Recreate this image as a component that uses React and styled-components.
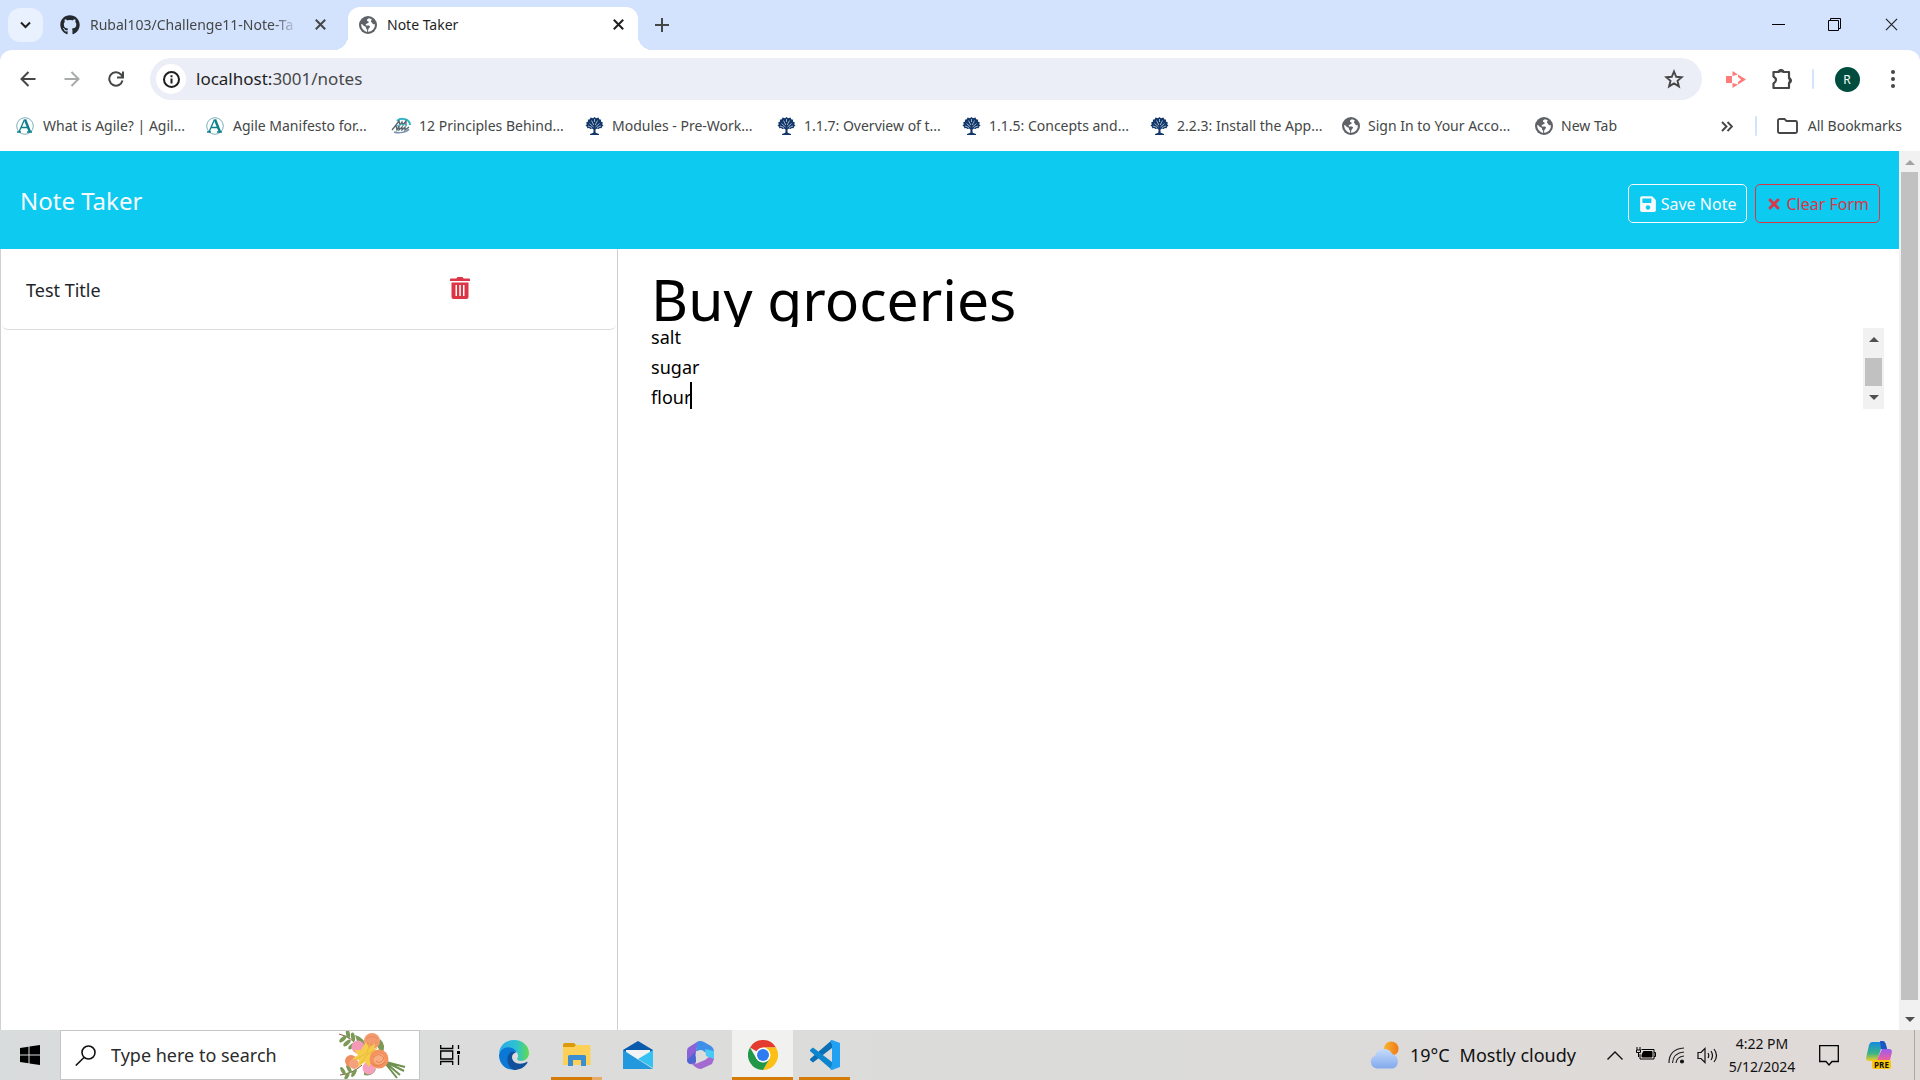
import React, { useLayoutEffect, useRef } from "react";
import styled, { createGlobalStyle } from "styled-components";
import { FaGithub, FaSave, FaTimes } from "react-icons/fa";

const Global = createGlobalStyle`
  * { box-sizing: border-box; }
  body { margin: 0; background: #fff; font-family: "Noto Sans", "Open Sans", sans-serif; color: #1f1f1f; }
  button, input, textarea { font-family: inherit; }
`;

/* ---------- shell ---------- */
const Screen = styled.div`
  display: grid;
  grid-template-rows: auto 1fr auto;
  height: 100vh;
  overflow: hidden;
`;
const BareButton = styled.button`
  display: flex;
  align-items: center;
  justify-content: center;
  flex: none;
  padding: 0;
  border: 0;
  background: none;
  color: ${(p) => p.$color || "#444746"};
  width: ${(p) => p.$w || 44}px;
  height: ${(p) => p.$h || 40}px;
`;

/* ---------- browser ---------- */
const Browser = styled.header`background: #d3e2fd;`;
const TabStrip = styled.div`
  display: flex;
  align-items: flex-end;
  height: 50px;
`;
const TabSearch = styled(BareButton)`
  align-self: center;
  margin: 0 9px 0 8px;
  border-radius: 12px;
  background: #e9f0fe;
`;
const Tab = styled.div`
  position: relative;
  display: flex;
  align-items: center;
  gap: 10px;
  width: ${(p) => p.$w}px;
  height: 43px;
  padding: ${(p) => (p.$active ? "0 10px 8px 11px" : "0 16px 8px 8px")};
  border-radius: 12px 12px 0 0;
  background: ${(p) => (p.$active ? "#fff" : "none")};
  svg { flex: none; }
  ${(p) => p.$active && `
    &::before, &::after {
      content: "";
      position: absolute;
      bottom: 0;
      width: 14px;
      height: 14px;
    }
    &::before { left: -14px; background: radial-gradient(circle at 0 0, transparent 14px, #fff 14px); }
    &::after { right: -14px; background: radial-gradient(circle at 100% 0, transparent 14px, #fff 14px); }
  `}
`;
const TabTitle = styled.span`
  flex: 1;
  overflow: hidden;
  white-space: nowrap;
  font-size: 14px;
  line-height: 20px;
  color: ${(p) => (p.$fade ? "#444746" : "#1f1f1f")};
  ${(p) => p.$fade && "mask-image: linear-gradient(90deg, #000 88%, transparent);"}
`;
const WindowControls = styled.div`
  display: flex;
  align-self: flex-start;
  margin-left: auto;
`;
const Toolbar = styled.div`
  display: flex;
  align-items: center;
  height: 58px;
  padding: 0 8px 0 6px;
  border-radius: 12px 12px 0 0;
  background: #fff;
`;
const Omnibox = styled.div`
  display: flex;
  align-items: center;
  flex: 1;
  height: 42px;
  margin: 0 12px 0 12px;
  padding: 0 6px;
  border-radius: 21px;
  background: #ebeef7;
`;
const SiteInfo = styled(BareButton)`border-radius: 50%; background: #fff;`;
const Address = styled.div`
  flex: 1;
  display: grid;
  padding-left: 10px;
  font-size: 17px;
  line-height: 24px;
`;
const Url = styled.a`
  color: #1f1f1f;
  text-decoration: none;
  span { color: #474747; }
`;
const Divider = styled.span`
  width: 2px;
  height: 20px;
  border-radius: 1px;
  background: #d3e2fd;
  margin: ${(p) => p.$margin || 0};
`;
const Avatar = styled.span`
  display: grid;
  place-items: center;
  width: 25px;
  height: 25px;
  border-radius: 50%;
  background: #004d40;
  color: #fff;
  font-size: 12px;
`;
const Bookmarks = styled.nav`
  display: flex;
  align-items: center;
  height: 43px;
  padding: 0 18px 7px 15px;
  background: #fff;
`;
const Bookmark = styled.a`
  display: flex;
  align-items: center;
  gap: ${(p) => p.$gap || 8}px;
  width: ${(p) => (p.$w ? p.$w + "px" : "auto")};
  white-space: nowrap;
  font-size: 14px;
  line-height: 20px;
  color: #444746;
  text-decoration: none;
  svg { flex: none; }
`;
const BookmarkEnd = styled.div`
  display: flex;
  align-items: center;
  gap: 20px;
  margin-left: auto;
`;

/* ---------- page ---------- */
const Viewport = styled.main`
  display: grid;
  grid-template-columns: 1fr 21px;
  min-height: 0;
`;
const Page = styled.div`
  display: grid;
  grid-template-rows: auto 1fr;
  min-height: 0;
`;
const NavBar = styled.div`
  display: flex;
  align-items: center;
  justify-content: space-between;
  height: 98px;
  padding: 2px 19px 0 20px;
  background: #0dcaf0;
`;
const Brand = styled.a`
  font-size: 24px;
  line-height: 36px;
  color: #f8f9fa;
  text-decoration: none;
`;
const Actions = styled.div`
  display: flex;
  gap: 8px;
  padding-top: 5px;
`;
const OutlineButton = styled.button`
  display: flex;
  align-items: center;
  gap: 4px;
  height: 39px;
  padding: 0 10px;
  border: 1px solid currentColor;
  border-radius: 5px;
  background: none;
  color: ${(p) => p.$color};
  font-size: 16px;
  line-height: 24px;
`;
const Columns = styled.div`
  display: grid;
  grid-template-columns: 32.55% 1fr;
  min-height: 0;
`;
const NoteList = styled.ul`
  margin: 0;
  padding: 0 1px;
  list-style: none;
  border: solid #ced0d2;
  border-width: 0 1px;
`;
const NoteItem = styled.li`
  display: flex;
  align-items: flex-start;
  height: 81px;
  padding: 26px 24px;
  border-bottom: 1px solid #dcdee0;
  border-radius: 0 0 6px 6px;
`;
const NoteName = styled.span`
  flex: 0 0 424px;
  font-size: 18px;
  line-height: 30px;
  color: #212529;
`;
const Editor = styled.form`
  padding: 21px 15px 0 33px;
`;
const TitleInput = styled.input`
  display: block;
  width: 100%;
  height: 57px;
  padding: 0;
  border: 0;
  outline: 0;
  font-size: 57px;
  line-height: 57px;
  color: #000;
`;
const TextRow = styled.div`
  position: relative;
  display: grid;
  grid-template-columns: 1fr 21px;
  align-items: start;
  margin-top: 1px;
`;
const TextInput = styled.textarea`
  display: block;
  width: 100%;
  height: 84px;
  padding: 0;
  border: 0;
  outline: 0;
  resize: none;
  overflow: hidden;
  font-size: 18px;
  line-height: 30px;
  color: #000;
`;
const Caret = styled.span`
  position: absolute;
  left: 39px;
  bottom: 3px;
  width: 2px;
  height: 27px;
  background: #000;
`;
const Track = styled.div`
  display: grid;
  grid-template-rows: ${(p) => p.$rows};
  justify-items: center;
  height: ${(p) => p.$h};
  background: #f1f1f1;
`;
const Thumb = styled.div`width: 17px; background: #c1c1c1; grid-row: 3;`;
const ArrowBox = styled(BareButton)`grid-row: ${(p) => p.$row};`;

/* ---------- taskbar ---------- */
const Taskbar = styled.footer`
  display: flex;
  height: 50px;
  background: linear-gradient(90deg, #d9dcdc, #dcdcdb 35%, #dbdbda 60%, #e0dad7);
`;
const SearchBox = styled.label`
  display: flex;
  align-items: center;
  width: 360px;
  padding: 0 12px 0 14px;
  border: 1px solid #c6c6c6;
  background: #fff;
`;
const SearchInput = styled.input`
  flex: 1;
  min-width: 0;
  margin-left: 15px;
  padding: 0;
  border: 0;
  outline: 0;
  font-size: 18px;
  line-height: 26px;
  &::placeholder { color: #2b2b2b; opacity: 1; }
`;
const TaskButton = styled(BareButton)`
  height: 50px;
  background-color: ${(p) => (p.$active ? "#f1f1ef" : "transparent")};
  background-image: ${(p) =>
    p.$line ? `linear-gradient(90deg, #d47b08 ${p.$line}, #e6ad68 ${p.$line})` : "none"};
  background-size: 100% 3px;
  background-position: bottom;
  background-repeat: no-repeat;
`;
const Apps = styled.div`
  display: flex;
  gap: ${(p) => p.$gap || 0}px;
`;
const Tray = styled.div`
  display: flex;
  align-items: center;
  margin-left: auto;
`;
const Weather = styled.button`
  display: flex;
  align-items: center;
  gap: 10px;
  padding: 0 18px 0 0;
  border: 0;
  background: none;
  color: #111;
  font-size: 18px;
  line-height: 26px;
`;
const Clock = styled.time`
  width: 88px;
  text-align: center;
  font-size: 14px;
  line-height: 23px;
  color: #111;
  span { display: block; }
`;
const ShowDesktop = styled(BareButton)`
  margin-left: 8px;
  border-left: 1px solid #a9a6a4;
`;

/* ---------- icons ---------- */
const Globe = ({ s = 18 }) => (
  <svg width={s} height={s} viewBox="0 0 18 18">
    <circle cx="9" cy="9" r="9" fill="#5f6368" />
    <path d="M10 2.2c-1.4.5-2.3 1.3-2 2.3.3.9 1.500.7 1.800 1.500.3 1-1.600 1.200-2.700 1.900-.8.5-.4 1.600.6 1.600h2c1.400 0 1.600 1.300.9 2.100-.8.8-1.300 1.300-1.500 2.900l-.3 1.300A7 7 0 0 0 15.900 8c-1.200.6-2.200.300-2.600-.7-.4-1.100-1.500-1-1.300-2.200.1-.7.900-.9.700-1.800A7 7 0 0 0 10 2.200zM2.200 8C2 12 4.500 15 8 15.900l.2-2.400c-.9-.2-1.300-.8-1.200-1.700.1-1-.6-1.300-1.500-1.600C4 9.700 4 8.200 2.200 8z" fill="#fff" />
  </svg>
);
const Cross = ({ s = 11, w = 2 }) => (
  <svg width={s} height={s} viewBox="0 0 11 11" stroke="currentColor" strokeWidth={w}><path d="M.8.8l9.400 9.400M10.200.8L.8 10.200" /></svg>
);
const AgileA = () => (
  <svg width="20" height="18" viewBox="0 0 20 18" fill="none">
    <circle cx="10" cy="9" r="8.300" stroke="#7fb0bd" strokeWidth="1" />
    <path d="M2 15h4M4 15L9.500 2.500M6 10.500h7.500M12 15h5" stroke="#0b7f8c" strokeWidth="1.300" />
    <path d="M10 2.500L15 15" stroke="#0b7f8c" strokeWidth="2.400" />
  </svg>
);
const AgileAlliance = () => (
  <svg width="20" height="18" viewBox="0 0 20 18" fill="none">
    <path d="M6 4c4-4 13-2 13 4" stroke="#35b6c8" strokeWidth="2" />
    <path d="M3 15c5 2 13 0 15-3" stroke="#7d93b5" strokeWidth="1.500" />
    <path d="M5 8l3-4 1 4 2-3 1 3 3-4v4M1 13l4-5 1 5 2-4v4l3-3v3l3-3v3l4-3" stroke="#56656e" strokeWidth="1.300" />
    <path d="M6 9c3-2 8-2 10 0" stroke="#35b6c8" strokeWidth="1.200" />
  </svg>
);
const Tree = () => (
  <svg width="19" height="18" viewBox="0 0 19 18" fill="#12376b">
    <path d="M9.500 0l1.500 1.200L13.500.6l.7 1.700 2 .5-.3 1.800 2 1-.7 1.600 1.300 1.500-1.700 1 .1 1.500-2.100-.1-1 1-2-.6-1.400 1.200.3 3 3.300 1.300v1H5v-1l3.300-1.300.3-3-1.400-1.200-2 .6-1-1-2.100.1.100-1.500-1.700-1 1.300-1.500-.7-1.600 2-1-.3-1.800 2-.5.7-1.700L8 1.200z" />
    <path d="M8.500 10L4.500 6.500M10.500 10l4-3.500M8.800 8L6.500 3.500M10.200 8l2.300-4.500M9.500 5V2M7 10.500l-4-1.500M12 10.500L16 9" stroke="#fff" strokeWidth=".6" fill="none" />
  </svg>
);
const Triangle = ({ up, color = "#505050" }) => (
  <svg width="10" height="5" viewBox="0 0 10 5" fill={color}><path d={up ? "M0 5L5 0l5 5z" : "M0 0l5 5 5-5z"} /></svg>
);
const Trash = () => (
  <svg width="20" height="22" viewBox="0 0 20 22" fill="#dc3545">
    <path d="M1 1.500h5.500L7.500 0h5l1 1.500H19q1 0 1 1V4H0V2.500q0-1 1-1z" />
    <path fillRule="evenodd" d="M1.500 5.500h17V20q0 2-2 2h-13q-2 0-2-2zM5.500 8v11H7V8zm3.800 0v11h1.500V8zM13 8v11h1.500V8z" />
  </svg>
);
const Flowers = () => (
  <svg width="69" height="48" viewBox="0 0 69 48">
    <g fill="none" stroke="#6f9150" strokeWidth="2"><path d="M48 31l19 5M48 31l18 9M48 32l14 12M47 32l12 15" /></g>
    <path d="M1 3q13 3 20 14M2 44q12-1 22-10" fill="none" stroke="#8b5a4a" strokeWidth="1" />
    <g fill="#7c9a55">
      <ellipse cx="5" cy="8" rx="2" ry="4.500" transform="rotate(50 5 8)" /><ellipse cx="10" cy="3" rx="2" ry="4.500" transform="rotate(-10 10 3)" />
      <ellipse cx="9" cy="12" rx="2" ry="4.500" transform="rotate(50 9 12)" /><ellipse cx="15" cy="6" rx="2" ry="4.500" transform="rotate(-10 15 6)" />
      <ellipse cx="14" cy="15" rx="2" ry="4.500" transform="rotate(50 14 15)" /><ellipse cx="5" cy="40" rx="1.800" ry="4.500" transform="rotate(-30 5 40)" />
      <ellipse cx="11" cy="38" rx="1.800" ry="4.500" transform="rotate(-30 11 38)" /><ellipse cx="9" cy="45" rx="1.800" ry="4" transform="rotate(30 9 45)" />
      <ellipse cx="16" cy="42" rx="1.800" ry="4.500" transform="rotate(30 16 42)" />
      <path d="M17 4q10 2 11 14l-8-5zM42 8q7 6 2 15l-5-8zM26 40q6-4 12-2-3 8-12 6z" />
    </g>
    <circle cx="20" cy="16" r="6.500" fill="#f49ab8" /><circle cx="31" cy="37" r="6.500" fill="#f7a0bd" />
    <circle cx="34" cy="10" r="8" fill="#f39a6e" /><path d="M28 8q6-5 12 0M29 12q5 4 10-1" stroke="#e88a60" fill="none" />
    <circle cx="13" cy="30" r="6" fill="#f08e63" /><circle cx="16" cy="33" r="5" fill="#f4a27c" />
    <path d="M28 11l3 6 6-5-1 7 7 0-5 5 3 6-7-1-3 7-4-5-7 5 1-7-7-1 6-4-4-5 7 0z" fill="#f5cd4b" />
    <path d="M17 29l12-7 3-10M22 33l8-10 9-6" stroke="#e9ba38" fill="none" />
    <circle cx="41" cy="28" r="9.500" fill="#f4935f" /><circle cx="41" cy="28" r="5.500" fill="#f8ae83" /><path d="M35 27q6-7 11 0-3 7-8 3M33 32q7 6 14-1" stroke="#e5824f" fill="none" />
  </svg>
);
const Edge = () => (
  <svg width="30" height="30" viewBox="0 0 30 30">
    <defs><linearGradient id="e1"><stop stopColor="#2aa9ea" /><stop offset=".6" stopColor="#2fc3cf" /><stop offset="1" stopColor="#62db4b" /></linearGradient></defs>
    <path d="M0 13C1 5 7 0 15 0c9 0 15 6 15 13 0 5-4 8-8 8-3 0-4.500-1-3.500-3 2-4-1-7-6-8C7 9 2 10 0 13z" fill="url(#e1)" />
    <path d="M0 15C1 10 6 6.500 11 7.500c4 .8 6 3 6.500 5-3-2-7 1-6.500 6 .4 4 4 9 8 9.500C9 33 0 25 0 15z" fill="#0a78d4" />
    <path d="M9 16c1.500-4 5-6 8-3.500-4 1-5 5-3 8 3 4 9 4 13.500 1.500 1-.5 1.300.3.800 1C25 28 20 30 15 30 10 28 7 21 9 16z" fill="#11509b" />
  </svg>
);
const Explorer = () => (
  <svg width="28" height="24" viewBox="0 0 28 24">
    <path d="M0 2q0-2 2-2h9l2 2v3H0z" fill="#dc9a08" /><path d="M0 4h11l2-2h13q1.500 0 1.500 1.500V22H0z" fill="#fdd158" /><path d="M5 23V13.500q0-1.500 1.500-1.500h15q1.500 0 1.500 1.500V23h-5v-6h-8v6z" fill="#3b8ed2" />
  </svg>
);
const Mail = () => (
  <svg width="30" height="28" viewBox="0 0 30 28">
    <path d="M0 9L15 0l15 9v3H0z" fill="#0a5bab" /><path d="M3 9h24v6L15 20 3 15z" fill="#f3f3f3" /><path d="M0 9l30 18V9L15 18z" fill="#35c2f3" /><path d="M0 9v19h30z" fill="#2299df" />
  </svg>
);
const Office = () => (
  <svg width="27" height="28" viewBox="0 0 27 28">
    <path d="M10 1L2 6Q0 7 0 10v9q0 3 3 4l5 1 1-4V8l5-8z" fill="#8c63d6" /><path d="M10 1q3-2 7 0l7 4q3 2 3 5v9q-2-4-9-8L9 10z" fill="#3f8fe8" /><path d="M27 12v6l-2 5-11 5q-4 0-8-4l12-5z" fill="#a36bd0" /><path d="M8 11l1 10L3 23q-3-2-3-4z" fill="#4966d2" /><path d="M18 8l9 2v8l-8-3z" fill="#49c9f5" /><circle cx="13.500" cy="14" r="5" fill="#dcdcdb" />
  </svg>
);
const Chrome = () => (
  <svg width="30" height="30" viewBox="0 0 30 30">
    <path d="M15 15L2 7.500A15 15 0 0 1 28 7.500H15z" fill="#e33b2e" /><path d="M15 7.500h13A15 15 0 0 1 15 30l6.500-11.500z" fill="#fcc015" /><path d="M2 7.500l6.500 11.300L15 22.500 21.500 18.700 15 30A15 15 0 0 1 2 7.500z" fill="#219748" /><circle cx="15" cy="15" r="7.500" fill="#fff" /><circle cx="15" cy="15" r="6" fill="#2f7cf0" />
  </svg>
);
const VSCode = () => (
  <svg width="30" height="30" viewBox="0 0 30 30">
    <path d="M22 0v8L3 22.500.5 20.500q-1-1 0-2z" fill="#0a6fb5" /><path d="M.5 9.500L3 7.500 22 22v8L.5 11.500q-1-1 0-2z" fill="#0c85cf" /><path d="M22 0l8 3v24l-8 3-2-1 2-4V5l-2-4z" fill="#22a0f2" />
  </svg>
);
const Cloud = () => (
  <svg width="30" height="28" viewBox="0 0 31 28">
    <defs><linearGradient id="c1" x2="0" y2="1"><stop stopColor="#c5dcfb" /><stop offset="1" stopColor="#82a9ee" /></linearGradient><linearGradient id="c2"><stop stopColor="#f7b42c" /><stop offset="1" stopColor="#f07a1c" /></linearGradient></defs>
    <circle cx="22" cy="7.500" r="7.500" fill="url(#c2)" /><path d="M7 28a7 7 0 0 1-1.500-13.500A9.500 9.500 0 0 1 23 13a8 8 0 0 1 1 15z" fill="url(#c1)" />
  </svg>
);
const Copilot = () => (
  <svg width="26" height="28" viewBox="0 0 26 28">
    <defs><linearGradient id="p1" x2="0" y2="1"><stop stopColor="#168ae0" /><stop offset=".6" stopColor="#3cb487" /><stop offset="1" stopColor="#f2cf22" /></linearGradient><linearGradient id="p2" x2="0" y2="1"><stop stopColor="#9b5cf0" /><stop offset="1" stopColor="#f0609a" /></linearGradient></defs>
    <path d="M6 1h10q3 0 4 3l1 4h-6l-3 9q-1 3-4 3H3q-4 0-2.500-5L3 4q1-3 3-3z" fill="url(#p1)" /><path d="M14 0h3q2 0 3 4l1 4h-6z" fill="#1c55c4" /><path d="M16 8h7q4 0 2.500 5L24 19H11z" fill="url(#p2)" />
    <rect x="6" y="19" width="19" height="9" rx="2" fill="#fdc50a" /><text x="15.500" y="26.500" textAnchor="middle" fontSize="8" fontWeight="700" fontFamily="Open Sans, sans-serif" fill="#111">PRE</text>
  </svg>
);

const BOOKMARKS = [
  ["What is Agile? | Agil...", AgileA, 190],
  ["Agile Manifesto for...", AgileA, 186],
  ["12 Principles Behind...", AgileAlliance, 194],
  ["Modules - Pre-Work...", Tree, 192],
  ["1.1.7: Overview of t...", Tree, 185],
  ["1.1.5: Concepts and...", Tree, 188],
  ["2.2.3: Install the App...", Tree, 192],
  ["Sign In to Your Acco...", Globe, 193],
  ["New Tab", Globe, 0],
];

export default function App() {
  const body = useRef(null);
  useLayoutEffect(() => { body.current.scrollTop = body.current.scrollHeight; }, []);
  return (
    <>
      <Global />
      <Screen>
        <Browser>
          <TabStrip>
            <TabSearch $w={35} $h={34} $color="#1f1f1f" aria-label="Search tabs">
              <svg width="11" height="8" viewBox="0 0 11 8" fill="none" stroke="currentColor" strokeWidth="2"><path d="M1 1.500l4.500 4.500L10 1.500" /></svg>
            </TabSearch>
            <Tab $w={296}>
              <FaGithub size={20} color="#24292f" />
              <TabTitle $fade>Rubal103/Challenge11-Note-Ta</TabTitle>
              <BareButton $w={24} $h={20} aria-label="Close tab"><Cross /></BareButton>
            </Tab>
            <Tab $w={290} $active>
              <Globe />
              <TabTitle>Note Taker</TabTitle>
              <BareButton $w={20} $h={20} $color="#1f1f1f" aria-label="Close tab"><Cross /></BareButton>
            </Tab>
            <BareButton $w={48} $h={50} aria-label="New tab">
              <svg width="14" height="14" viewBox="0 0 14 14" stroke="currentColor" strokeWidth="2"><path d="M7 0v14M0 7h14" /></svg>
            </BareButton>
            <WindowControls>
              <BareButton $w={56} $h={48} $color="#000" aria-label="Minimize"><svg width="13" height="13" stroke="currentColor"><path d="M0 6.500h13" /></svg></BareButton>
              <BareButton $w={56} $h={48} $color="#000" aria-label="Restore"><svg width="13" height="13" fill="none" stroke="currentColor"><path d="M.5 2.500h10v10H.5zM2.500 2.500v-2h10v10h-2" /></svg></BareButton>
              <BareButton $w={58} $h={48} $color="#222" aria-label="Close"><Cross s={13} w={1} /></BareButton>
            </WindowControls>
          </TabStrip>
          <Toolbar>
            <BareButton aria-label="Back"><svg width="16" height="16" viewBox="0 0 16 16" fill="none" stroke="currentColor" strokeWidth="2"><path d="M15.500 8H2M8.500 1L1.500 8l7 7" /></svg></BareButton>
            <BareButton $color="#a8aaab" aria-label="Forward"><svg width="16" height="16" viewBox="0 0 16 16" fill="none" stroke="currentColor" strokeWidth="2"><path d="M.5 8H14M7.500 1l7 7-7 7" /></svg></BareButton>
            <BareButton aria-label="Reload"><svg width="16" height="16" viewBox="0 0 16 16" fill="none" stroke="currentColor" strokeWidth="2"><path d="M14.500 9.500A6.700 6.700 0 1 1 13 3.500L14.500 5.500M15 .5v6H9" /></svg></BareButton>
            <Omnibox>
              <SiteInfo $w={30} $h={30} $color="#1f1f1f" aria-label="Site information"><svg width="17" height="17" viewBox="0 0 17 17" fill="none" stroke="currentColor" strokeWidth="2"><circle cx="8.500" cy="8.500" r="7.500" /><path d="M8.500 7.500v5M8.500 4.200v2" /></svg></SiteInfo>
              <Address><Url href="#notes">localhost:<span>3001/notes</span></Url></Address>
              <BareButton aria-label="Bookmark this page"><svg width="20" height="20" viewBox="0 0 20 20" fill="none" stroke="currentColor" strokeWidth="1.900"><path d="M10 2.500l2.200 5.300 5.600.4-4.300 3.600 1.400 5.600-4.900-3-4.900 3 1.400-5.600L2.200 8.200l5.600-.4z" /></svg></BareButton>
            </Omnibox>
            <BareButton aria-label="Screen recorder"><svg width="20" height="17" viewBox="0 0 20 17" fill="#ff7b7b"><path d="M0 5h6v7H0zM6.500 0L12 3.500 6.500 5zM12 3.500L20 8.500l-8 5V11l3-2.500L12 6zM6.500 12l5.500 1.500-5.500 3.500z" /></svg></BareButton>
            <BareButton $w={48} aria-label="Extensions"><svg width="22" height="21" viewBox="0 0 22 21" fill="none" stroke="currentColor" strokeWidth="2.200"><path d="M2.500 3h5q2.500-2 5 0h5.500v6q2 2.500 0 5v5H2.500v-4.500q5-3.500 0-7z" strokeLinejoin="round" /><path d="M7.500 2.500q2.500-3 5 0M18.500 9q3 2.500 0 5" /></svg></BareButton>
            <Divider $margin="0 6px" />
            <BareButton $w={54} $color="#fff" aria-label="Profile"><Avatar>R</Avatar></BareButton>
            <BareButton $w={38} aria-label="Menu"><svg width="4" height="18" viewBox="0 0 4 18" fill="currentColor"><circle cx="2" cy="2" r="2" /><circle cx="2" cy="9" r="2" /><circle cx="2" cy="16" r="2" /></svg></BareButton>
          </Toolbar>
          <Bookmarks aria-label="Bookmarks">
            {BOOKMARKS.map(([name, Icon, w]) => <Bookmark href="#bookmark" key={name} $w={w}><Icon />{name}</Bookmark>)}
            <BookmarkEnd>
              <BareButton $w={16} $h={24} aria-label="More bookmarks"><svg width="12" height="11" viewBox="0 0 12 11" fill="none" stroke="currentColor" strokeWidth="1.900"><path d="M1 1l4.500 4.500L1 10M6.500 1L11 5.500 6.500 10" /></svg></BareButton>
              <Divider />
              <Bookmark href="#all" $gap={10}><svg width="21" height="16" viewBox="0 0 21 16" fill="none" stroke="#444746" strokeWidth="1.900"><path d="M1 2.500Q1 1 2.500 1H7.500L9.500 3H18.500Q20 3 20 4.500V13.500Q20 15 18.500 15H2.500Q1 15 1 13.500z" /></svg>All Bookmarks</Bookmark>
            </BookmarkEnd>
          </Bookmarks>
        </Browser>

        <Viewport>
          <Page>
            <NavBar>
              <Brand href="#home">Note Taker</Brand>
              <Actions>
                <OutlineButton $color="#f8f9fa"><FaSave size={18} />Save Note</OutlineButton>
                <OutlineButton $color="#dc3545"><FaTimes size={16} />Clear Form</OutlineButton>
              </Actions>
            </NavBar>
            <Columns>
              <NoteList>
                <NoteItem><NoteName>Test Title</NoteName><BareButton $w={20} $h={26} aria-label="Delete note"><Trash /></BareButton></NoteItem>
              </NoteList>
              <Editor>
                <TitleInput aria-label="Note title" defaultValue="Buy groceries" />
                <TextRow>
                  <TextInput ref={body} aria-label="Note text" defaultValue={"salt\nsugar\nflour"} />
                  <Caret />
                  <Track $h="81px" $rows="23px 7px 28px 23px">
                    <ArrowBox $row={1} $w={21} $h={23} aria-label="Scroll up"><Triangle up /></ArrowBox>
                    <Thumb />
                    <ArrowBox $row={4} $w={21} $h={23} aria-label="Scroll down"><Triangle /></ArrowBox>
                  </Track>
                </TextRow>
              </Editor>
            </Columns>
          </Page>
          <Track $h="100%" $rows="21px 0 1fr 9px 21px">
            <ArrowBox $row={1} $w={21} $h={23} aria-label="Scroll up"><Triangle up color="#a3a3a3" /></ArrowBox>
            <Thumb />
            <ArrowBox $row={5} $w={21} $h={20} aria-label="Scroll down"><Triangle /></ArrowBox>
          </Track>
        </Viewport>

        <Taskbar>
          <TaskButton $w={60} aria-label="Start"><svg width="20" height="20" viewBox="0 0 20 20"><path d="M0 3l8.500-1.300v7.800H0zM9.500 1.500L20 0v9.500H9.500zM0 10.500h8.500v7.800L0 17zM9.500 10.500H20V20L9.500 18.500z" /></svg></TaskButton>
          <SearchBox>
            <svg width="21" height="21" viewBox="0 0 21 21" fill="none" stroke="#111" strokeWidth="1.600"><circle cx="13.500" cy="7.500" r="6.500" /><path d="M9 12.500L.8 20.500" /></svg>
            <SearchInput aria-label="Search" placeholder="Type here to search" />
            <Flowers />
          </SearchBox>
          <TaskButton $w={60} aria-label="Task view"><svg width="21" height="20" viewBox="0 0 21 20" fill="none" stroke="#000" strokeWidth="1.300"><path d="M.7 0v3.500h12V0M.7 20v-3.500h12V20M.7 6h12v8h-12zM18.500 0v4M18.500 10v10" /><path d="M17 6h3v3h-3z" fill="#000" stroke="none" /></svg></TaskButton>
          <Apps $gap={4}>
            <TaskButton $w={67} aria-label="Edge"><Edge /></TaskButton>
            <Apps $gap={10}>
              <TaskButton $w={51} $line="80%" aria-label="File Explorer"><Explorer /></TaskButton>
              <TaskButton $w={51} aria-label="Mail"><Mail /></TaskButton>
              <TaskButton $w={55} aria-label="Microsoft 365"><Office /></TaskButton>
            </Apps>
            <Apps $gap={6}>
              <TaskButton $w={61} $active $line="100%" aria-label="Chrome"><Chrome /></TaskButton>
              <TaskButton $w={51} $line="100%" aria-label="Visual Studio Code"><VSCode /></TaskButton>
            </Apps>
          </Apps>
          <Tray>
            <Weather><Cloud /><span>19°C</span><span>Mostly cloudy</span></Weather>
            <BareButton $w={42} $h={50} aria-label="Hidden icons"><svg width="16" height="9" viewBox="0 0 16 9" fill="none" stroke="#111" strokeWidth="1.400"><path d="M.5 8.500L8 1l7.500 7.500" /></svg></BareButton>
            <Apps $gap={12}>
              <svg width="20" height="14" viewBox="0 0 20 14" fill="none" stroke="#000"><path d="M5.500 2.500h12.500v9.500H4v-5M18 5.500h1.500v4H18" /><path d="M7.500 4.500h8.500v5.500H6V8z" fill="#000" /><path d="M1 0v3M4 0v3M.5 3h4v2.500h-4zM2.500 5.500V10" /></svg>
              <svg width="17" height="17" viewBox="0 0 17 17" fill="none" stroke="#222" strokeWidth="1.200"><path d="M1 16Q1 2 16 1M4.500 16Q5 6 16 5M8 16Q8.500 10 16 9" /><circle cx="14" cy="14.500" r="1.500" fill="#000" /></svg>
              <svg width="21" height="17" viewBox="0 0 21 17" fill="none" stroke="#111" strokeWidth="1.200"><path d="M1 5.500h3l4-4v14l-4-4H1zM11 6q1.500 2.500 0 5M14 4q3 4.500 0 9M17 2q5 6.500 0 13" /></svg>
            </Apps>
            <Clock><span>4:22 PM</span><span>5/12/2024</span></Clock>
            <BareButton $w={46} $h={50} aria-label="Notifications"><svg width="20" height="21" viewBox="0 0 20 21" fill="none" stroke="#000" strokeWidth="1.300"><path d="M.7.700h18.600V16.500H13L10 20l-3-3.500H.7z" /></svg></BareButton>
            <BareButton $w={54} $h={50} aria-label="Copilot"><Copilot /></BareButton>
            <ShowDesktop $w={6} $h={50} aria-label="Show desktop" />
          </Tray>
        </Taskbar>
      </Screen>
    </>
  );
}
